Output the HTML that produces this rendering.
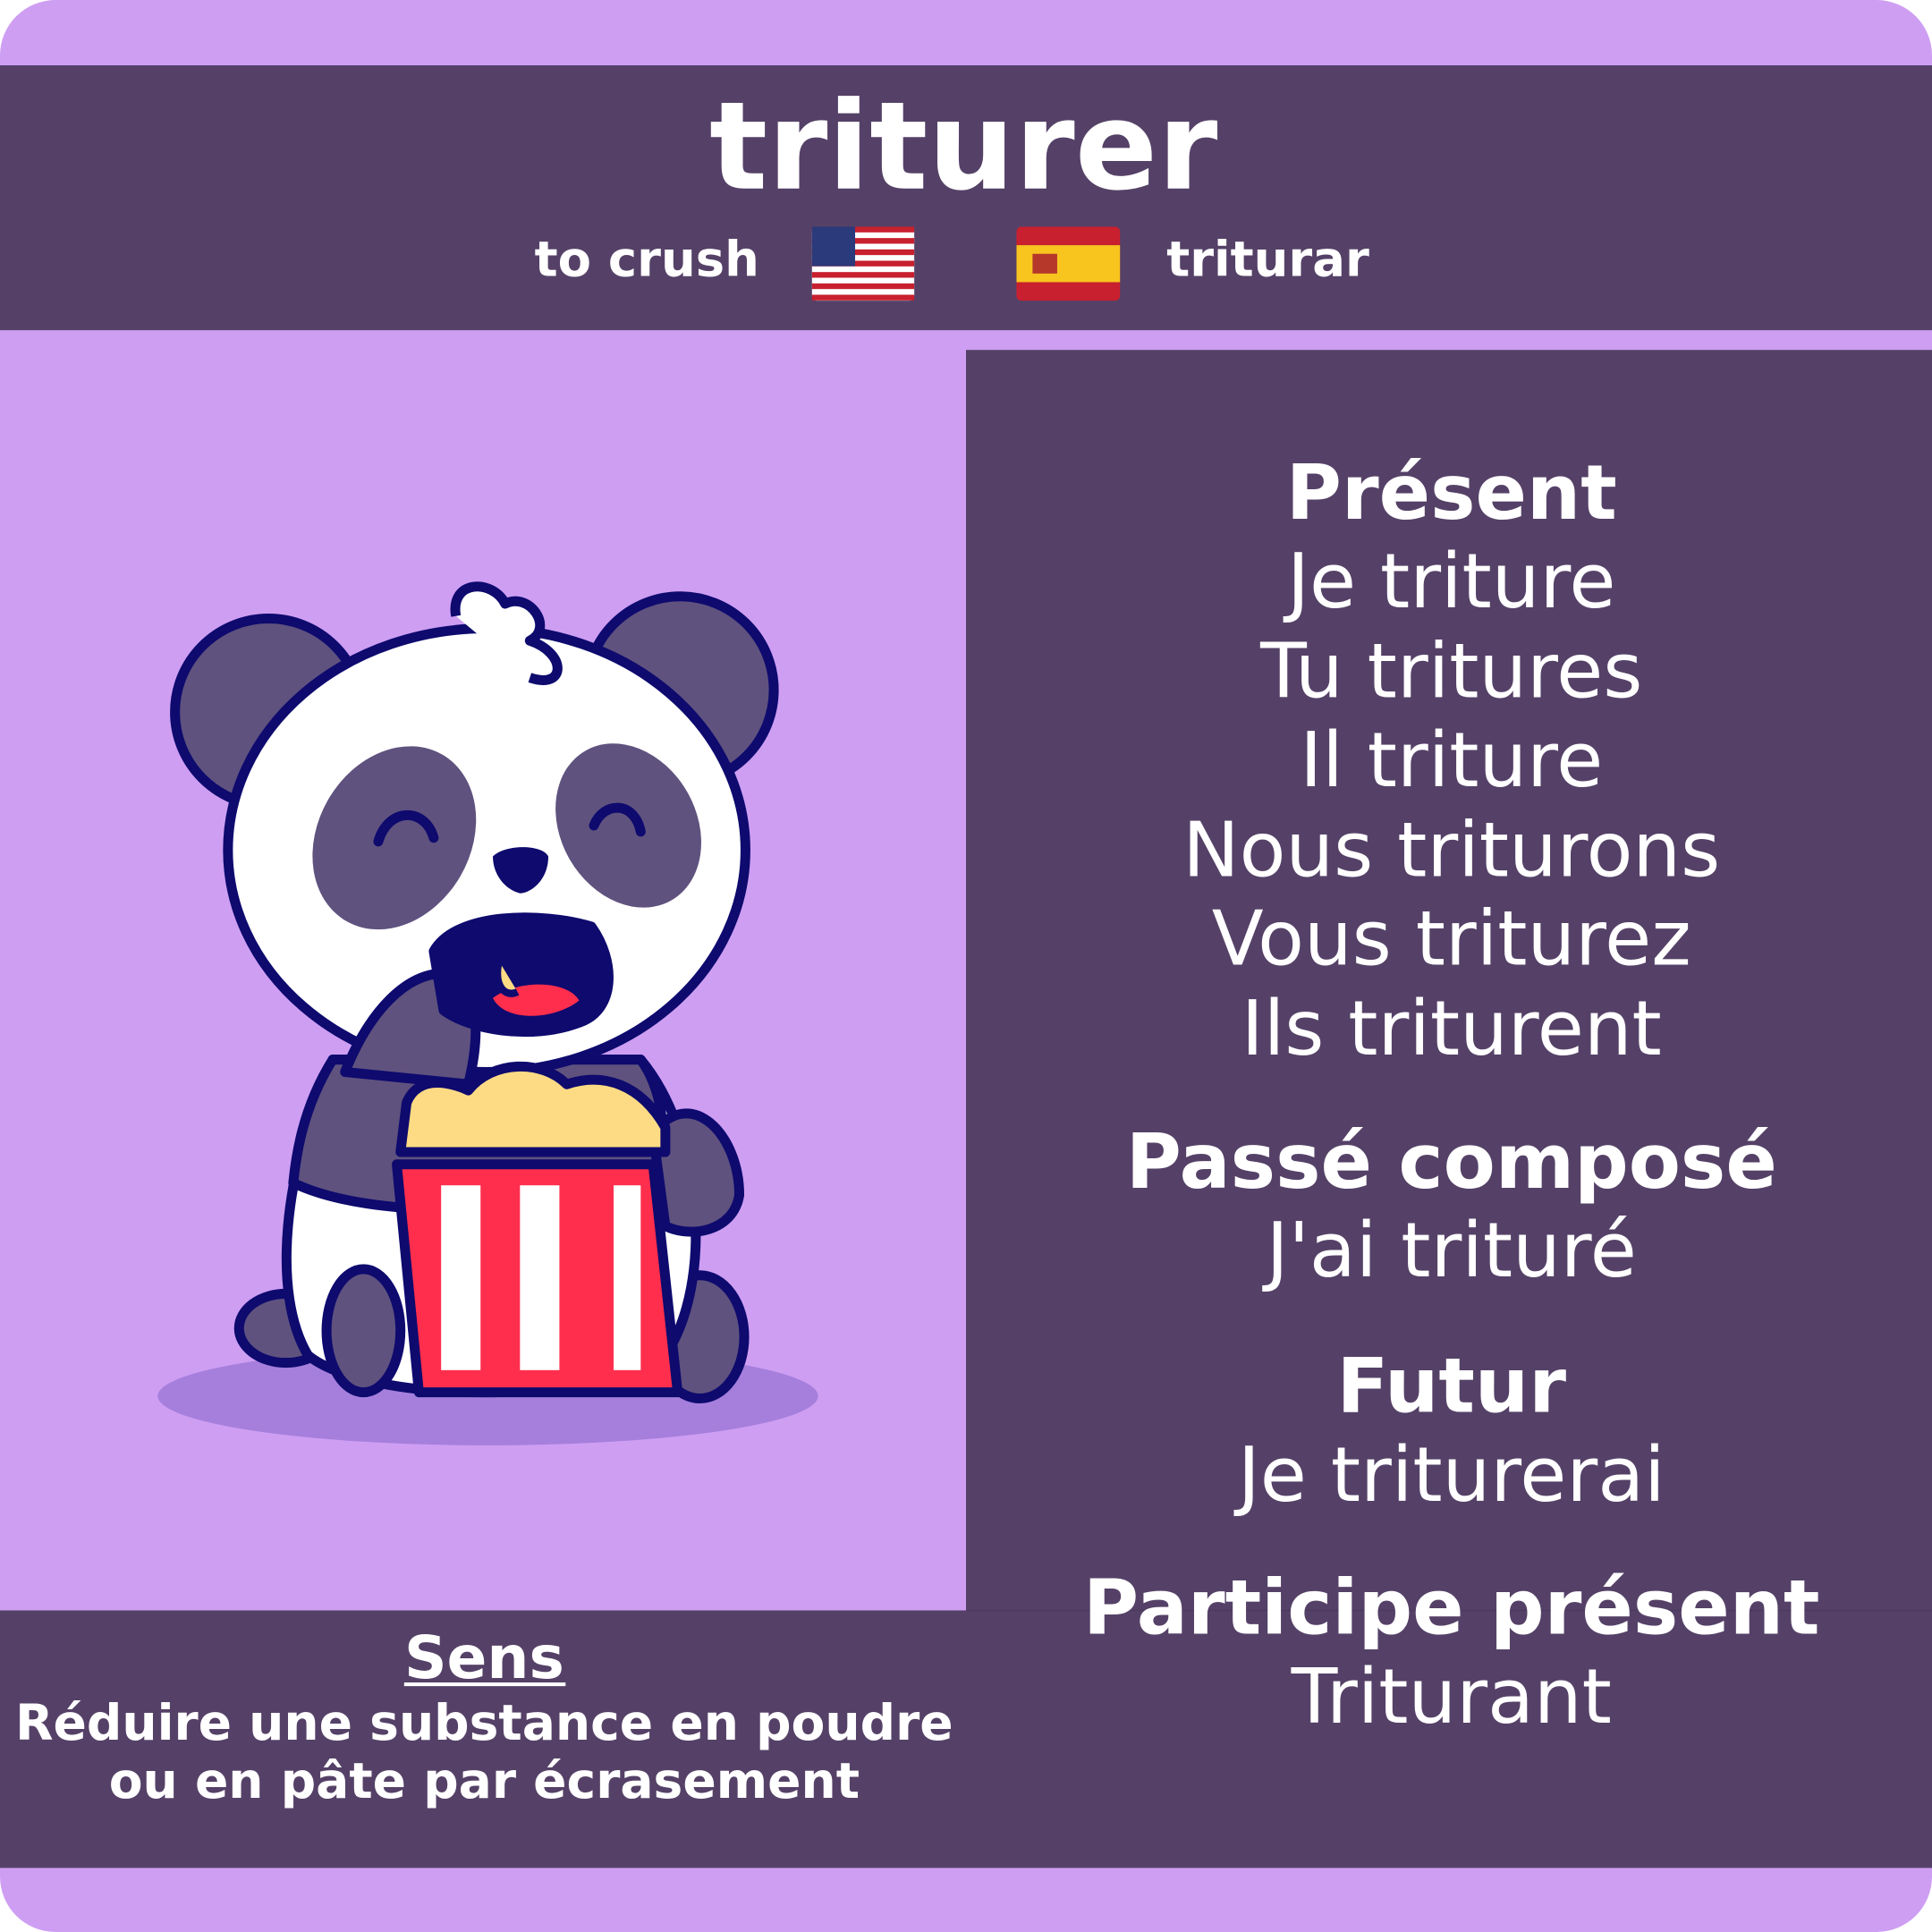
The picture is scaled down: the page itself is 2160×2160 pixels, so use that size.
<!DOCTYPE html>
<html><head><meta charset="utf-8"><style>
html,body{margin:0;padding:0;background:#fff;}
svg{display:block;}
text{font-family:"DejaVu Sans","Liberation Sans",sans-serif;fill:#fff;}
</style></head><body>
<svg width="2160" height="2160" viewBox="0 0 1568 1568" xmlns="http://www.w3.org/2000/svg">
<rect x="0" y="0" width="1568" height="1568" rx="45" fill="#CE9EF3"/>
<rect x="0" y="53" width="1568" height="215" fill="#554167"/>
<rect x="784" y="284" width="784" height="1232" fill="#554167"/>
<rect x="0" y="1307" width="784" height="209" fill="#554167"/>
<line x1="784" y1="1307" x2="1568" y2="1307" stroke="#4c3a5e" stroke-width="1"/>

<text x="782" y="153" font-size="99" font-weight="bold" text-anchor="middle">triturer</text>
<text x="525" y="224" font-size="39.5" font-weight="bold" text-anchor="middle">to crush</text>
<text x="1029" y="224" font-size="39.5" font-weight="bold" text-anchor="middle">triturar</text>

<!-- US flag -->
<g>
<rect x="659" y="184" width="83" height="60" rx="4" fill="#fff"/>
<g fill="#C8202F">
<rect x="659" y="184" width="83" height="4.6"/><rect x="659" y="193.2" width="83" height="4.6"/><rect x="659" y="202.4" width="83" height="4.6"/><rect x="659" y="211.6" width="83" height="4.6"/><rect x="659" y="220.8" width="83" height="4.6"/><rect x="659" y="230" width="83" height="4.6"/><rect x="659" y="239.2" width="83" height="4.6"/>
</g>
<rect x="659" y="184" width="35" height="32" fill="#2A3A7A"/>
</g>
<!-- ES flag -->
<g>
<rect x="825" y="184" width="84" height="60" rx="4" fill="#C8202F"/>
<rect x="825" y="199" width="84" height="30" fill="#F7C51E"/>
<rect x="838" y="206" width="20" height="16" fill="#B5382B"/>
</g>

<!-- Right column -->
<g text-anchor="middle" font-size="61.5">
<text x="1178" y="421" font-weight="bold">Présent</text>
<text x="1178" y="493">Je triture</text>
<text x="1178" y="566">Tu tritures</text>
<text x="1178" y="638">Il triture</text>
<text x="1178" y="711">Nous triturons</text>
<text x="1178" y="783">Vous triturez</text>
<text x="1178" y="856">Ils triturent</text>
<text x="1178" y="964" font-weight="bold">Passé composé</text>
<text x="1178" y="1036">J'ai trituré</text>
<text x="1178" y="1146" font-weight="bold">Futur</text>
<text x="1178" y="1218">Je triturerai</text>
<text x="1178" y="1326" font-weight="bold">Participe présent</text>
<text x="1178" y="1398">Triturant</text>
</g>

<!-- Bottom left -->
<text x="393" y="1362" font-size="48" font-weight="bold" text-anchor="middle">Sens</text>
<line x1="328" y1="1367" x2="459" y2="1367" stroke="#fff" stroke-width="3"/>
<text x="393" y="1412" font-size="40" font-weight="bold" text-anchor="middle">Réduire une substance en poudre</text>
<text x="393" y="1459" font-size="40" font-weight="bold" text-anchor="middle">ou en pâte par écrasement</text>

<!-- Panda -->
<ellipse cx="396" cy="1133" rx="268" ry="40" fill="#A67FDC"/>
<g stroke="#0E0A6E" stroke-width="8" stroke-linejoin="round">
<circle cx="218" cy="578" r="76" fill="#5F527E"/>
<circle cx="552" cy="560" r="76" fill="#5F527E"/>
<ellipse cx="232" cy="1078" rx="38" ry="28" fill="#5F527E"/>
<ellipse cx="568" cy="1085" rx="36" ry="50" fill="#5F527E"/>
<path d="M270 860 C230 950 220 1050 250 1100 C300 1140 480 1140 540 1100 C580 1040 570 920 520 860 Z" fill="#fff"/>
<path d="M270 860 C245 900 240 940 238 960 C300 990 440 990 530 950 C545 920 535 880 520 860 Z" fill="#5F527E"/>
<ellipse cx="395" cy="690" rx="210" ry="180" fill="#fff"/>
<path d="M370 500 C365 470 400 470 410 490 C430 480 450 510 430 520 C460 530 460 560 430 550" fill="#fff"/>
<path d="M530 920 C560 880 600 920 600 970 C595 1000 560 1005 540 995 Z" fill="#5F527E"/>
<path d="M280 870 C300 820 330 790 360 790 C390 795 390 840 380 880 Z" fill="#5F527E"/>
<ellipse cx="295" cy="1080" rx="30" ry="50" fill="#5F527E"/>
<path d="M322 945 L530 945 L550 1130 L340 1130 Z" fill="#FF2E4D"/>
<path d="M330 895 C340 870 370 880 380 885 C400 860 440 860 460 880 C490 870 520 880 540 915 L540 935 L325 935 Z" fill="#FDDB84"/>
<path d="M352 772 C370 740 440 740 480 752 C500 780 500 820 470 830 C430 845 380 835 360 820 Z" fill="#0E0A6E"/>
</g>
<path d="M400 810 C420 795 460 795 470 812 C450 828 410 830 400 810 Z" fill="#FF2E4D"/>
<g fill="#fff">
<rect x="358" y="962" width="32" height="150"/>
<rect x="422" y="962" width="32" height="150"/>
<rect x="498" y="962" width="22" height="150"/>
</g>
<ellipse cx="320" cy="680" rx="62" ry="78" fill="#5F527E" transform="rotate(30 320 680)"/>
<ellipse cx="510" cy="670" rx="55" ry="70" fill="#5F527E" transform="rotate(-30 510 670)"/>
<path d="M307 683 C315 655 345 655 352 680" fill="none" stroke="#0E0A6E" stroke-width="8" stroke-linecap="round"/>
<path d="M482 670 C490 650 515 650 520 675" fill="none" stroke="#0E0A6E" stroke-width="8" stroke-linecap="round"/>
<path d="M400 695 C410 685 440 685 445 695 C445 715 430 725 422 725 C410 722 400 710 400 695 Z" fill="#0E0A6E"/>
<path d="M405 780 C400 800 410 810 420 805" fill="#FDDB84" stroke="#0E0A6E" stroke-width="6"/>
</svg>
</body></html>
